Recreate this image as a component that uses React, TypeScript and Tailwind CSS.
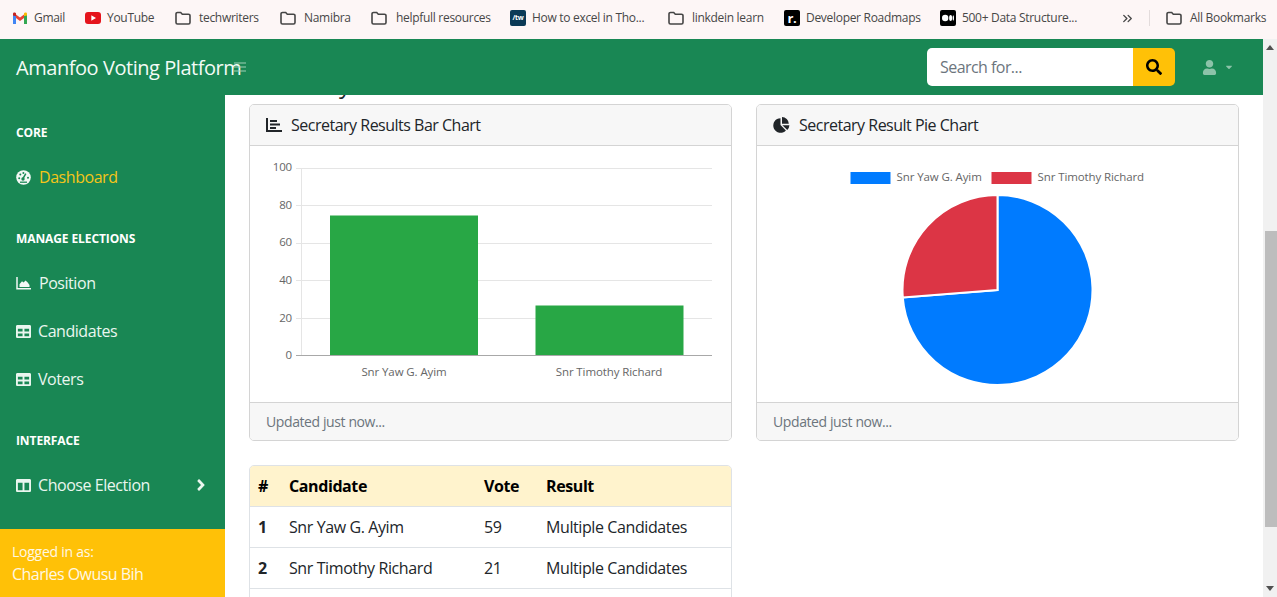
import React from "react";
import { FaTable, FaColumns, FaAngleRight, FaSearch, FaUser, FaCaretDown } from "react-icons/fa";
import { ChevronsRight } from "lucide-react";

const Folder = () => (
  <svg width="16" height="14" viewBox="0 0 16 14" fill="none" stroke="#454545" strokeWidth="1.6">
    <path d="M1 3a1.5 1.5 0 0 1 1.5-1.5h3.2L7.3 3.2h6.2A1.5 1.5 0 0 1 15 4.7v6.8a1.5 1.5 0 0 1-1.5 1.5h-11A1.5 1.5 0 0 1 1 11.500z" />
  </svg>
);
const Gmail = () => (
  <svg width="16" height="12" viewBox="0 0 16 12">
    <path d="M1 12V2l3 2v8z" fill="#4285f4" />
    <path d="M12 12V4l3-2v10z" fill="#34a853" />
    <path d="M4 6V2.500L8 5.500l4-3V6L8 9z" fill="#ea4335" />
    <path d="M1 3.500V1.800C1 .5 2.500 0 3.400.7L4 1.200v3z" fill="#c5221f" />
    <path d="M12 4V1.200l.6-.5C13.500 0 15 .5 15 1.800v1.700z" fill="#fbbc04" />
  </svg>
);
const YouTube = () => (
  <svg width="16" height="12" viewBox="0 0 16 12">
    <rect width="16" height="12" rx="3" fill="#e5141c" />
    <path d="M6.300 3.300v5.400L11 6z" fill="#fff" />
  </svg>
);
const Tw = () => (
  <span className="flex h-4 w-4 items-center justify-center rounded-[2px] bg-[#0b3a56] text-[7px] font-bold text-white">/tw</span>
);
const Rm = () => (
  <span className="flex h-4 w-4 items-center justify-center rounded-[2px] bg-black text-[13px] font-bold leading-none text-white">r.</span>
);
const Med = () => (
  <svg width="16" height="16" viewBox="0 0 16 16">
    <rect width="16" height="16" rx="2" fill="#000" />
    <circle cx="5.200" cy="8" r="3.200" fill="#fff" />
    <ellipse cx="10.600" cy="8" rx="1.500" ry="3" fill="#fff" />
    <ellipse cx="13.300" cy="8" rx=".7" ry="2.700" fill="#fff" />
  </svg>
);
const Gauge = () => (
  <svg width="15" height="15" viewBox="0 0 15 15">
    <circle cx="7.500" cy="7.500" r="7.300" fill="#f2f8f5" />
    <path d="M9.800 3.600L7.100 8.300" stroke="#198754" strokeWidth="1.500" />
    <circle cx="7" cy="9" r="1.700" fill="#198754" />
    <circle cx="3.200" cy="8.200" r="1" fill="#198754" />
    <circle cx="4.300" cy="4.500" r="1" fill="#198754" />
    <circle cx="7.400" cy="3" r="1" fill="#198754" />
    <circle cx="12" cy="7.800" r="1" fill="#198754" />
    <path d="M4 12.200h7" stroke="#198754" strokeWidth="1.300" />
  </svg>
);
const AreaIcon = () => (
  <svg width="15" height="14" viewBox="0 0 15 14">
    <path d="M1 1v11.800h14" fill="none" stroke="#f2f8f5" strokeWidth="1.500" />
    <path d="M3.500 11V8.200L6 5.200l1.600 1.300L9.500 4.500l2 1.800 2 2.700V11z" fill="#f2f8f5" />
  </svg>
);
const BarsIcon = () => (
  <svg width="16" height="14" viewBox="0 0 16 14">
    <path d="M1 0v13h15" fill="none" stroke="#212529" strokeWidth="2" />
    <path d="M4 2h7v2H4zM4 5.500h10v2H4zM4 9h6v2H4z" fill="#212529" />
  </svg>
);
const PieIcon = () => (
  <svg width="17" height="16" viewBox="0 0 17 16">
    <path d="M7.500 1.200a7.300 7.300 0 1 0 5.400 12.300L7.500 8.100z" fill="#212529" />
    <path d="M9 0a7 7 0 0 1 6.800 6.700H9z" fill="#212529" />
    <path d="M9.400 8.200h7a7.300 7.300 0 0 1-2.100 4.700z" fill="#212529" />
  </svg>
);

const marks = [
  { icon: <Gmail />, label: "Gmail", cls: "w-[73px] gap-[6px]" },
  { icon: <YouTube />, label: "YouTube", cls: "w-[90px] gap-[6px]" },
  { icon: <Folder />, label: "techwriters", cls: "w-[105px] gap-[8px]" },
  { icon: <Folder />, label: "Namibra", cls: "w-[91px] gap-[8px]" },
  { icon: <Folder />, label: "helpfull resources", cls: "w-[139px] gap-[9px]" },
  { icon: <Tw />, label: "How to excel in Tho...", cls: "w-[158px] gap-[6px]" },
  { icon: <Folder />, label: "linkdein learn", cls: "w-[116px] gap-[8px]" },
  { icon: <Rm />, label: "Developer Roadmaps", cls: "w-[156px] gap-[6px]" },
  { icon: <Med />, label: "500+ Data Structure...", cls: "w-[180px] gap-[6px]" },
];

const Heading = ({ children }: { children: React.ReactNode }) => (
  <div className="px-4 pt-[29px] pb-[11px] text-[12px] font-bold uppercase leading-[18px] tracking-[-0.1px] text-white">{children}</div>
);
const Item = ({ icon, label, active, right, cls }: { icon: React.ReactNode; label: string; active?: boolean; right?: React.ReactNode; cls?: string }) => (
  <div className={`flex h-12 items-center px-4 text-[16px] tracking-[-0.45px] ${active ? "text-[#f5c518]" : "text-[#eaf6ef]"}`}>
    <span className={`flex shrink-0 items-center text-[15px] text-[#eaf6ef] ${cls ?? "w-[23px]"}`}>{icon}</span>
    <span className="flex-1">{label}</span>
    {right}
  </div>
);

const Card = ({ icon, title, children }: { icon: React.ReactNode; title: string; children: React.ReactNode }) => (
  <div className="flex h-[337px] flex-col overflow-hidden rounded-[5px] border border-[#d4d4d4] bg-white">
    <div className="flex h-[41px] shrink-0 items-center gap-[9px] border-b border-[#d4d4d4] bg-[#f7f7f7] px-4 text-[16px] tracking-[-0.5px] text-[#212529]">
      {icon}
      <span>{title}</span>
    </div>
    <div className="flex-1">{children}</div>
    <div className="flex h-[38px] shrink-0 items-center border-t border-[#d4d4d4] bg-[#f7f7f7] px-4 text-[14px] tracking-[-0.4px] text-[#6c757d]">Updated just now...</div>
  </div>
);

const BarChart = () => {
  const grid = [
    [22.500, 25, "100"],
    [59.500, 62.500, "80"],
    [97.500, 100, "60"],
    [134.500, 137.500, "40"],
    [172.500, 175.500, "20"],
  ] as const;
  return (
    <svg width="481" height="256" viewBox="0 0 481 256" className="block" style={{ fontFamily: "'Open Sans', sans-serif" }}>
      {grid.map(([y, b, l]) => (
        <g key={l}>
          <line x1="46" x2="462" y1={y} y2={y} stroke="#e5e5e5" />
          <text x="42" y={b} textAnchor="end" fontSize="11.500" letterSpacing="-0.2" fill="#666">{l}</text>
        </g>
      ))}
      <line x1="51.500" x2="51.500" y1="22" y2="210" stroke="#e5e5e5" />
      <rect x="80" y="69.500" width="148" height="140" fill="#28a745" />
      <rect x="285.500" y="159.500" width="148" height="50" fill="#28a745" />
      <line x1="46" x2="462" y1="209.500" y2="209.500" stroke="#a8a8a8" />
      <text x="42" y="212.500" textAnchor="end" fontSize="11.500" fill="#666">0</text>
      <text x="154" y="230" textAnchor="middle" fontSize="11.500" letterSpacing="-0.1" fill="#666">Snr Yaw G. Ayim</text>
      <text x="359" y="230" textAnchor="middle" fontSize="11.500" letterSpacing="-0.1" fill="#666">Snr Timothy Richard</text>
    </svg>
  );
};

const PieChart = () => {
  const cx = 240.500, cy = 144, r = 95;
  const ex = cx + r * Math.sin((265.500 * Math.PI) / 180);
  const ey = cy - r * Math.cos((265.500 * Math.PI) / 180);
  return (
    <svg width="481" height="256" viewBox="0 0 481 256" className="block" style={{ fontFamily: "'Open Sans', sans-serif" }}>
      <rect x="93.500" y="26" width="40" height="12" fill="#007bff" />
      <text x="139.500" y="35" fontSize="11.500" letterSpacing="-0.1" fill="#666">Snr Yaw G. Ayim</text>
      <rect x="234.500" y="26" width="40" height="12" fill="#dc3545" />
      <text x="280.500" y="35" fontSize="11.500" letterSpacing="-0.1" fill="#666">Snr Timothy Richard</text>
      <path d={`M${cx} ${cy} L${cx} ${cy - r} A${r} ${r} 0 1 1 ${ex} ${ey} Z`} fill="#007bff" stroke="#fff" strokeWidth="2" />
      <path d={`M${cx} ${cy} L${ex} ${ey} A${r} ${r} 0 0 1 ${cx} ${cy - r} Z`} fill="#dc3545" stroke="#fff" strokeWidth="2" />
    </svg>
  );
};

const rows = [
  ["1", "Snr Yaw G. Ayim", "59", "Multiple Candidates"],
  ["2", "Snr Timothy Richard", "21", "Multiple Candidates"],
];

export default function App() {
  return (
    <div className="flex h-[597px] w-[1277px] flex-col overflow-hidden bg-white font-['Open_Sans',sans-serif] text-[#212529]">
      <div className="flex h-[39px] shrink-0 items-center bg-[#fdf6f6] pb-[3px] pl-[12px] text-[12px] tracking-[-0.3px] text-[#474747]">
        {marks.map((m) => (
          <div key={m.label} className={`flex shrink-0 items-center whitespace-nowrap ${m.cls}`}>
            <span className="flex w-4 shrink-0 justify-center">{m.icon}</span>
            <span>{m.label}</span>
          </div>
        ))}
        <ChevronsRight size={15} strokeWidth={2.200} color="#474747" />
        <div className="ml-[14px] h-4 w-px bg-[#e3dcdc]" />
        <div className="ml-[16px] flex items-center gap-2 whitespace-nowrap">
          <Folder />
          <span>All Bookmarks</span>
        </div>
      </div>
      <div className="flex min-h-0 flex-1">
        <div className="flex min-w-0 flex-1 flex-col">
          <div className="flex h-14 shrink-0 items-center bg-[#198754] pl-4 pr-[29px]">
            <span className="w-[217px] shrink-0 whitespace-nowrap pt-[2px] text-[20px] tracking-[-0.45px] text-[#f3fbf6]">Amanfoo Voting Platform</span>
            <svg width="14" height="12" viewBox="0 0 14 12" className="shrink-0" stroke="#9fd0b6" strokeWidth="1.200">
              <path d="M1 2h12M1 6h12M1 10h12" />
            </svg>
            <div className="ml-auto flex h-[38px] w-[248px] overflow-hidden rounded-[5px]">
              <div className="flex flex-1 items-center bg-white px-[13px] text-[16px] tracking-[-0.55px] text-[#6c757d]">Search for...</div>
              <div className="flex w-[42px] items-center justify-center bg-[#ffc107] text-black">
                <FaSearch size={16} />
              </div>
            </div>
            <div className="ml-[27px] flex items-center gap-[7px] text-[#8cc3a9]">
              <FaUser size={15} />
              <FaCaretDown size={10} />
            </div>
          </div>
          <div className="flex min-h-0 flex-1">
            <aside className="flex w-[225px] shrink-0 flex-col bg-[#198754]">
              <div className="flex-1">
                <Heading>Core</Heading>
                <Item icon={<Gauge />} label="Dashboard" active />
                <Heading>Manage Elections</Heading>
                <Item icon={<AreaIcon />} label="Position" />
                <Item icon={<FaTable />} label="Candidates" cls="w-[22px]" />
                <Item icon={<FaTable />} label="Voters" cls="w-[22px]" />
                <Heading>Interface</Heading>
                <Item icon={<FaColumns />} label="Choose Election" cls="w-[22px]" right={<FaAngleRight size={18} className="-mr-[1px]" />} />
              </div>
              <div className="flex h-[68px] shrink-0 flex-col justify-center bg-[#ffc107] pl-3 text-[#fff8e3]">
                <div className="text-[14px] leading-[22px] tracking-[-0.25px]">Logged in as:</div>
                <div className="text-[16px] leading-[22px] tracking-[-0.55px]">Charles Owusu Bih</div>
              </div>
            </aside>
            <main className="min-w-0 flex-1 overflow-hidden px-6">
              <h2 className="-mt-[27px] mb-[5px] h-[31px] text-[24px] font-medium leading-[31px] tracking-[-0.4px] text-[#212529]">Secretary</h2>
              <div className="grid grid-cols-2 gap-6">
                <Card icon={<BarsIcon />} title="Secretary Results Bar Chart"><BarChart /></Card>
                <Card icon={<PieIcon />} title="Secretary Result Pie Chart"><PieChart /></Card>
                <div className="overflow-hidden rounded-t-[5px] border border-[#dee2e6]">
                  <table className="w-full table-fixed border-collapse text-left text-[16px] tracking-[-0.4px]">
                    <colgroup>
                      <col className="w-[31px]" />
                      <col className="w-[195px]" />
                      <col className="w-[62px]" />
                      <col />
                    </colgroup>
                    <thead>
                      <tr className="h-[40px] bg-[#fff3cd] text-black">
                        <th className="pl-2 font-bold">#</th>
                        <th className="pl-2 font-bold">Candidate</th>
                        <th className="pl-2 font-bold">Vote</th>
                        <th className="pl-2 font-bold">Result</th>
                      </tr>
                    </thead>
                    <tbody>
                      {rows.map((r) => (
                        <tr key={r[0]} className="h-[41px] border-t border-[#dee2e6]">
                          <td className="pl-2 font-bold">{r[0]}</td>
                          <td className="pl-2">{r[1]}</td>
                          <td className="pl-2">{r[2]}</td>
                          <td className="pl-2">{r[3]}</td>
                        </tr>
                      ))}
                      <tr className="h-[41px] border-t border-[#dee2e6]"><td colSpan={4} /></tr>
                    </tbody>
                  </table>
                </div>
              </div>
            </main>
          </div>
        </div>
        <div className="flex w-[14px] shrink-0 flex-col bg-[#f1f1f1]">
          <div className="flex h-[17px] items-center justify-center">
            <svg width="8" height="5" viewBox="0 0 8 5"><path d="M0 5L4 0l4 5z" fill="#505050" /></svg>
          </div>
          <div className="h-[175px]" />
          <div className="ml-[2px] h-[296px] bg-[#bdbdbd]" />
          <div className="flex-1" />
          <div className="flex h-[17px] items-center justify-center">
            <svg width="8" height="5" viewBox="0 0 8 5"><path d="M0 0l4 5 4-5z" fill="#505050" /></svg>
          </div>
        </div>
      </div>
    </div>
  );
}
